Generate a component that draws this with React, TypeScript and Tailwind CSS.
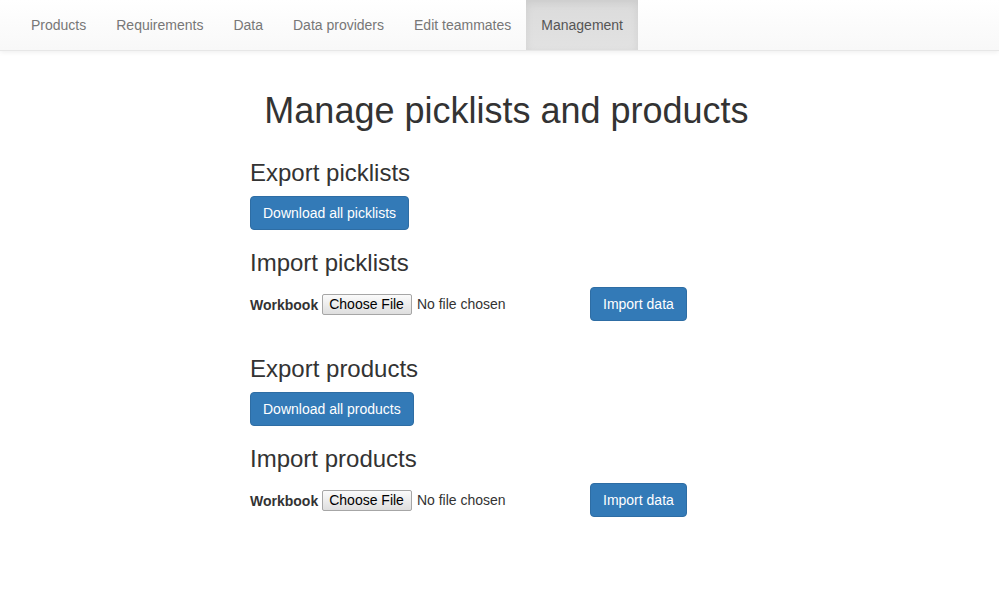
import React from "react";

const navItems = ["Products", "Requirements", "Data", "Data providers", "Edit teammates", "Management"];

const fileClasses =
  "text-[14px] text-[#333] file:mr-[5px] file:h-[21px] file:pl-[6px] file:pr-[7px] file:border file:border-solid file:border-[#a6a6a6] file:rounded-[2px] file:bg-gradient-to-b file:from-[#fbfbfb] file:to-[#dedede] file:text-[#000] file:text-[14px] file:leading-[19px]";

const Section: React.FC<{ kind: string; first?: boolean }> = ({ kind, first }) => (
  <div className={first ? "" : "mt-[35px]"}>
    <h3 className="text-[24px] leading-[26px] text-[#333]">Export {kind}</h3>
    <button className="mt-[10px] h-[34px] px-[12px] rounded-[4px] border border-[#2e6da4] bg-[#337ab7] text-white text-[14px]">
      Download all {kind}
    </button>
    <h3 className="mt-[20px] text-[24px] leading-[26px] text-[#333]">Import {kind}</h3>
    <form className="mt-[11px] flex items-center" onSubmit={(e) => e.preventDefault()}>
      <div className="w-[340px] flex items-center">
        <label className="font-bold text-[14px] text-[#333] mr-[4px] mt-[2px]">Workbook</label>
        <input type="file" className={fileClasses} />
      </div>
      <button className="h-[34px] px-[12px] rounded-[4px] border border-[#2e6da4] bg-[#337ab7] text-white text-[14px]">
        Import data
      </button>
    </form>
  </div>
);

const App: React.FC = () => {
  return (
    <div className="min-h-screen bg-white" style={{ fontFamily: '"Liberation Sans", Arial, sans-serif' }}>
      <nav className="h-[51px] bg-gradient-to-b from-white to-[#f8f8f8] border-b border-[#e7e7e7] shadow-[0_1px_5px_rgba(0,0,0,0.075)] pl-[16px] flex">
        {navItems.map((item) => (
          <a
            key={item}
            href="#"
            className={
              "px-[15px] h-[50px] leading-[50px] text-[14px] " +
              (item === "Management"
                ? "text-[#555] bg-gradient-to-b from-[#dbdbdb] to-[#e2e2e2] shadow-[inset_0_3px_9px_rgba(0,0,0,0.075)]"
                : "text-[#777]")
            }
          >
            {item}
          </a>
        ))}
      </nav>
      <h1 className="mt-[40px] pl-[14px] text-center text-[36px] leading-[40px] text-[#333]">
        Manage picklists and products
      </h1>
      <div className="ml-[250px] mt-[29px] w-[520px]">
        <Section kind="picklists" first />
        <Section kind="products" />
      </div>
    </div>
  );
};

export default App;
